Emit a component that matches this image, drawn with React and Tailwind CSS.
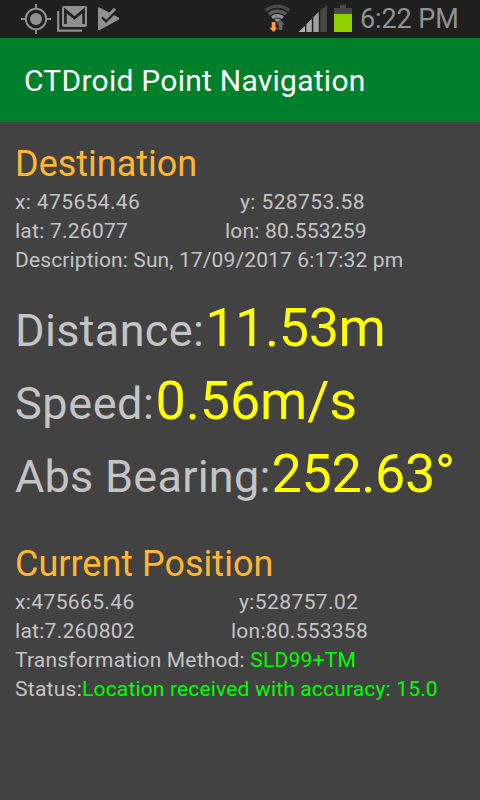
function StatusBar() {
  return (
    <div className="flex h-[38px] shrink-0 items-start bg-[#1f1f1f]">
      <svg width="260" height="38" viewBox="0 0 260 38" fill="none">
        <g stroke="#909090" strokeWidth="1.9">
          <circle cx="36" cy="19" r="10.2" />
          <path d="M36 4v5M36 29v5M21 19h5M46 19h5" />
        </g>
        <circle cx="36" cy="19" r="6" fill="#909090" />
        <path d="M58.2 11v19.6H82" stroke="#909090" strokeWidth="2.2" />
        <rect x="62" y="6" width="25" height="21" rx="2" fill="#909090" />
        <path d="M65.4 24V10.4L74.5 18L83.6 10.4V24" stroke="#1f1f1f" strokeWidth="2.6" />
        <path d="M98 8.6Q98 6.8 99.7 7.6L118.5 17.6Q120.2 18.7 118.5 19.8L99.8 30Q98 30.8 98 29Z" fill="#909090" />
        <path d="M108 10L117.5 14.5V7H108Z" fill="#1f1f1f" />
        <path d="M102.3 17.2L106 21L116.8 10.2" stroke="#1f1f1f" strokeWidth="2.8" />
        <path d="M103.6 15.4L106.2 18L115 8.8" stroke="#909090" strokeWidth="2.8" />
      </svg>
      <svg width="100" height="38" viewBox="260 0 100 38" fill="none">
        <g strokeWidth="3.3">
          <path d="M265.5 10.5Q277.5 1.8 289.5 10.5" stroke="#4a4a4a" />
          <path d="M268.8 14.2Q277.5 8 286.2 14.2" stroke="#5c5c5c" />
          <path d="M272 17.6Q277.5 13.8 283 17.6" stroke="#909090" />
        </g>
        <path d="M274.4 19.6Q277.5 17.6 280.6 19.6L277.5 22.4Z" fill="#909090" />
        <path d="M271.7 22h3.8v5.7h1.8L273.5 32l-4-4.3h2.2Z" fill="#ffa033" />
        <path d="M278.8 30v-5.5h-2L280.6 20l3.8 4.5h-2V30Z" fill="#686868" />
        <path d="M298.5 32L305 25.8V32Z" fill="#b0b0b0" />
        <path d="M306.3 32V24.3L311.8 18.8V32Z" fill="#a8a8a8" />
        <path d="M313.3 32V17.2L318.8 11.7V32Z" fill="#a0a0a0" />
        <path d="M320.3 32V10.3L326.8 5V32Z" fill="#484848" />
        <path d="M334 8h6V5h6v3h6v6h-18Z" fill="#484848" />
        <path d="M334 14h18v18h-18Z" fill="#91d000" />
      </svg>
      <span className="text-[27px] leading-[39px] tracking-[-0.1px] text-[#929292]">6:22 PM</span>
    </div>
  );
}

function Heading({ children, className = "" }) {
  return <h2 className={`h-[47px] text-[36px] leading-[46px] text-[#ffb733] ${className}`}>{children}</h2>;
}

function Pair({ left, right, className, rightClass }) {
  return (
    <div className="flex">
      <span className={className}>{left}</span>
      <span className={rightClass}>{right}</span>
    </div>
  );
}

function Reading({ label, value, labelClass, valueClass }) {
  return (
    <div className="flex h-[73px] items-baseline gap-px leading-[73px]">
      <span className={`text-[45px] ${labelClass}`}>{label}</span>
      <span className={`text-[54px] text-[#ffff00] ${valueClass}`}>{value}</span>
    </div>
  );
}

export default function App() {
  return (
    <div className="flex h-[800px] w-[480px] flex-col overflow-hidden whitespace-nowrap bg-[#424242] font-['Roboto',sans-serif]">
      <StatusBar />
      <header className="h-[84px] shrink-0 bg-[#00802b] pl-6 text-[30px] leading-[85px] tracking-[0.25px] text-white">
        CTDroid Point Navigation
      </header>
      <main className="flex flex-col pl-[15px] pt-[19px] text-[21px] leading-[29px] text-[#c4c4c4]">
        <Heading>Destination</Heading>
        <Pair left="x: 475654.46" right="y: 528753.58" className="w-[225px] tracking-[0.38px]" rightClass="tracking-[0.4px]" />
        <Pair left="lat: 7.26077" right="lon: 80.553259" className="w-[210px] tracking-[0.25px]" rightClass="tracking-[0.2px]" />
        <div className="tracking-[0.13px]">Description: Sun, 17/09/2017 6:17:32 pm</div>
        <section className="mt-[16px]">
          <Reading label="Distance:" value="11.53m" labelClass="tracking-[0.35px]" valueClass="tracking-[-0.45px]" />
          <Reading label="Speed:" value="0.56m/s" labelClass="tracking-[0.6px]" valueClass="tracking-[-0.2px]" />
          <Reading label="Abs Bearing:" value="252.63°" labelClass="tracking-[0.25px]" valueClass="tracking-[-0.45px]" />
        </section>
        <Heading className="mt-[31px]">Current Position</Heading>
        <Pair left="x:475665.46" right="y:528757.02" className="w-[224px] tracking-[0.38px]" rightClass="tracking-[0.4px]" />
        <Pair left="lat:7.260802" right="lon:80.553358" className="w-[216px] tracking-[0.27px]" rightClass="tracking-[0.25px]" />
        <div className="tracking-[0.17px]">Transformation Method: <span className="tracking-[0.25px] text-[#00ff00]">SLD99+TM</span></div>
        <div className="tracking-[0.28px]">Status:<span className="tracking-[0.16px] text-[#00ff00]">Location received with accuracy: 15.0</span></div>
      </main>
    </div>
  );
}
